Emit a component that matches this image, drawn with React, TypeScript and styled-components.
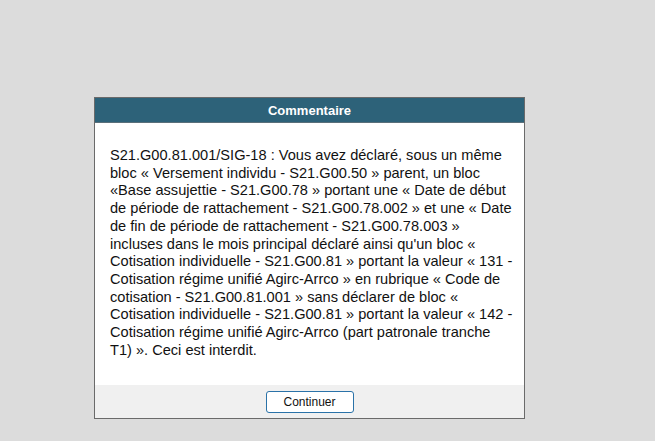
import styled, { createGlobalStyle } from "styled-components";

const GlobalStyle = createGlobalStyle`
  html, body {
    margin: 0;
    padding: 0;
    background: #dcdcdc;
    font-family: "Liberation Sans", Arial, sans-serif;
  }
`;

const Page = styled.div`
  width: 655px;
  height: 441px;
  padding-top: 97px;
  padding-left: 94px;
  box-sizing: border-box;
`;

const Dialog = styled.div`
  width: 431px;
  border: 1px solid #6a6a6a;
  background: #ffffff;
  box-sizing: border-box;
  display: flex;
  flex-direction: column;
`;

const Header = styled.div`
  height: 25px;
  background: #2d6279;
  border-bottom: 1px solid #5a6f7a;
  color: #ffffff;
  font-weight: bold;
  font-size: 13px;
  display: flex;
  align-items: center;
  justify-content: center;
  box-sizing: border-box;
`;

const Body = styled.div`
  padding: 24px 0 26px 15px;
  font-size: 14.6px;
  line-height: 17.7px;
  color: #111111;
  white-space: nowrap;
`;

const Footer = styled.div`
  background: #f0f0f0;
  height: 33px;
  display: flex;
  align-items: center;
  justify-content: center;
`;

const Button = styled.button`
  width: 88px;
  height: 22px;
  background: #ffffff;
  border: 1px solid #2a72a8;
  border-radius: 3px;
  font-family: "Liberation Sans", Arial, sans-serif;
  font-size: 12px;
  color: #111111;
  padding: 0;
`;

const lines = [
  "S21.G00.81.001/SIG-18 : Vous avez déclaré, sous un même",
  "bloc « Versement individu - S21.G00.50 » parent, un bloc",
  "«Base assujettie - S21.G00.78 » portant une « Date de début",
  "de période de rattachement - S21.G00.78.002 » et une « Date",
  "de fin de période de rattachement - S21.G00.78.003 »",
  "incluses dans le mois principal déclaré ainsi qu'un bloc «",
  "Cotisation individuelle - S21.G00.81 » portant la valeur « 131 -",
  "Cotisation régime unifié Agirc-Arrco » en rubrique « Code de",
  "cotisation - S21.G00.81.001 » sans déclarer de bloc «",
  "Cotisation individuelle - S21.G00.81 » portant la valeur « 142 -",
  "Cotisation régime unifié Agirc-Arrco (part patronale tranche",
  "T1) ». Ceci est interdit.",
];

export default function App() {
  return (
    <Page>
      <GlobalStyle />
      <Dialog>
        <Header>Commentaire</Header>
        <Body>
          {lines.map((l, i) => (
            <div key={i}>{l}</div>
          ))}
        </Body>
        <Footer>
          <Button>Continuer</Button>
        </Footer>
      </Dialog>
    </Page>
  );
}
